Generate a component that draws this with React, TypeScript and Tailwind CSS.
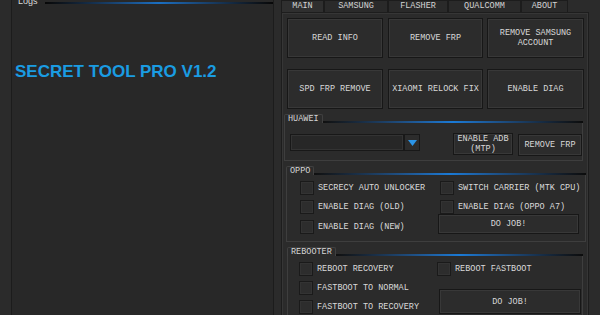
import React from "react";

const Btn = ({ className = "", children }: { className?: string; children: React.ReactNode }) => (
  <div
    className={
      "flex items-center justify-center text-center leading-[10px] border border-[#171717] bg-[#2c2c2c] shadow-[inset_0_0_0_1px_#383838] text-[#d8d8d8] " +
      className
    }
  >
    {children}
  </div>
);

const Check = ({ label, className = "" }: { label: string; className?: string }) => (
  <div className={"flex items-center gap-[4px] " + className}>
    <div className="w-[14px] h-[14px] border border-[#1a1a1a] bg-[#2d2d2d] shadow-[inset_0_0_0_1px_#333]" />
    <span className="text-[#dadada] whitespace-nowrap">{label}</span>
  </div>
);

const Group = ({
  label,
  className = "",
  bodyClass = "",
  children,
}: {
  label: string;
  className?: string;
  bodyClass?: string;
  children: React.ReactNode;
}) => (
  <div className={"flex flex-col " + className}>
    <div className="flex items-end h-[9px]">
      <div className="h-[9px] px-[3px] leading-[9px] border border-b-0 border-[#404040] rounded-t-[2px] text-[#d6d6d6]">
        {label}
      </div>
      <div className="flex-1 h-[2px] bg-gradient-to-r from-[#101010] via-[#1a7ad6] to-[#0c0c0c]" />
    </div>
    <div className={"flex-1 border border-t-0 border-[#3e3e3e] " + bodyClass}>{children}</div>
  </div>
);

export default function App() {
  const tabs = [
    { t: "MAIN", w: "w-[43px]", active: true },
    { t: "SAMSUNG", w: "w-[64px]" },
    { t: "FLASHER", w: "w-[60px]" },
    { t: "QUALCOMM", w: "w-[73px]" },
    { t: "ABOUT", w: "w-[47px]" },
  ];
  return (
    <div className="w-[600px] h-[315px] overflow-hidden bg-[#2b2b2b] flex font-['Liberation_Mono',monospace] text-[8.5px]">
      {/* Left logs panel */}
      <div className="w-[274px] pl-[11px] h-full flex flex-col shrink-0">
        <div className="h-full border-l border-r border-[#1c1c1c] bg-[#282828] flex flex-col">
          <div className="flex items-start h-[6px]">
            <div className="ml-[6px] w-[19px] h-[6px] overflow-visible text-[#d8d8d8] leading-[9px] mt-[-3px] font-['Liberation_Sans',sans-serif] text-[9px]">
              Logs
            </div>
            <div className="ml-[8px] mt-[2px] flex-1 h-[2px] bg-gradient-to-r from-[#080808] via-[#1a6fc2] to-[#080808]" />
          </div>
          <div className="mt-[57px] pl-[3px] text-[17px] leading-[17px] font-bold text-[#1a9ce2] font-['Liberation_Sans',sans-serif] whitespace-nowrap">
            SECRET TOOL PRO V1.2
          </div>
        </div>
      </div>

      {/* Right panel */}
      <div className="ml-[7px] w-[308px] flex flex-col shrink-0">
        <div className="flex h-[12px]">
          {tabs.map((tb) => (
            <div
              key={tb.t}
              className={
                "h-[12px] flex items-center justify-center border border-b-0 border-[#1c1c1c] text-[#d4d4d4] " +
                tb.w +
                (tb.active ? " bg-[#2f2f2f]" : " bg-[#2a2a2a]")
              }
            >
              {tb.t}
            </div>
          ))}
        </div>
        <div className="flex-1 border border-[#1d1d1d] bg-[#2b2b2b] shadow-[inset_0_0_0_1px_#363636] pl-[5px] pt-[5px] flex flex-col">
          <div className="grid grid-cols-[96px_96px_97px] gap-x-[4px] gap-y-[11px] w-[297px]">
            <Btn className="h-[40px]">READ INFO</Btn>
            <Btn className="h-[40px] ml-[1px]">REMOVE FRP</Btn>
            <Btn className="h-[40px]">
              REMOVE SAMSUNG
              <br />
              ACCOUNT
            </Btn>
            <Btn className="h-[40px]">SPD FRP REMOVE</Btn>
            <Btn className="h-[40px] ml-[1px]">XIAOMI RELOCK FIX</Btn>
            <Btn className="h-[40px]">ENABLE DIAG</Btn>
          </div>

          {/* HUAWEI */}
          <Group label="HUAWEI" className="mt-[5px] ml-[-3px] w-[299px] h-[47px]" bodyClass="flex items-start pt-[10px] pl-[5px]">
            <div className="flex w-[130px] h-[17px] mt-[1px]">
              <div className="w-[114px] h-[17px] border border-[#181818] bg-[#272727] shadow-[inset_0_0_0_1px_#333]" />
              <div className="w-[16px] h-[17px] border border-[#181818] bg-[#2c2c2c] flex items-center justify-center">
                <svg width="9" height="6" viewBox="0 0 9 6">
                  <path d="M0 0 H9 L4.5 6 Z" fill="#2b95e8" />
                </svg>
              </div>
            </div>
            <Btn className="ml-[33px] w-[60px] h-[22px]">
              ENABLE ADB
              <br />
              (MTP)
            </Btn>
            <Btn className="ml-[5px] w-[64px] h-[22px] mt-[1px]">REMOVE FRP</Btn>
          </Group>

          {/* OPPO */}
          <Group label="OPPO" className="mt-[5px] ml-[-1px] w-[300px] h-[76px]" bodyClass="pl-[13px] pt-[6px] relative">
            <div className="flex flex-col gap-[5px]">
              <div className="flex">
                <Check label="SECRECY AUTO UNLOCKER" className="w-[140px]" />
                <Check label="SWITCH CARRIER (MTK CPU)" />
              </div>
              <div className="flex">
                <Check label="ENABLE DIAG (OLD)" className="w-[140px]" />
                <Check label="ENABLE DIAG (OPPO A7)" />
              </div>
              <div className="flex items-end">
                <Check label="ENABLE DIAG (NEW)" className="w-[138px]" />
                <Btn className="w-[141px] h-[20px] mt-[-5px] self-start">DO JOB!</Btn>
              </div>
            </div>
          </Group>

          {/* REBOOTER */}
          <Group label="REBOOTER" className="mt-[5px] w-[296px] h-[80px]" bodyClass="pl-[11px] pt-[6px]">
            <div className="flex">
              <div className="flex flex-col gap-[5px] w-[138px]">
                <Check label="REBOOT RECOVERY" />
                <Check label="FASTBOOT TO NORMAL" />
                <Check label="FASTBOOT TO RECOVERY" />
              </div>
              <div className="flex flex-col">
                <Check label="REBOOT FASTBOOT" />
                <Btn className="ml-[2px] mt-[13px] w-[142px] h-[25px]">DO JOB!</Btn>
              </div>
            </div>
          </Group>
        </div>
      </div>
    </div>
  );
}
